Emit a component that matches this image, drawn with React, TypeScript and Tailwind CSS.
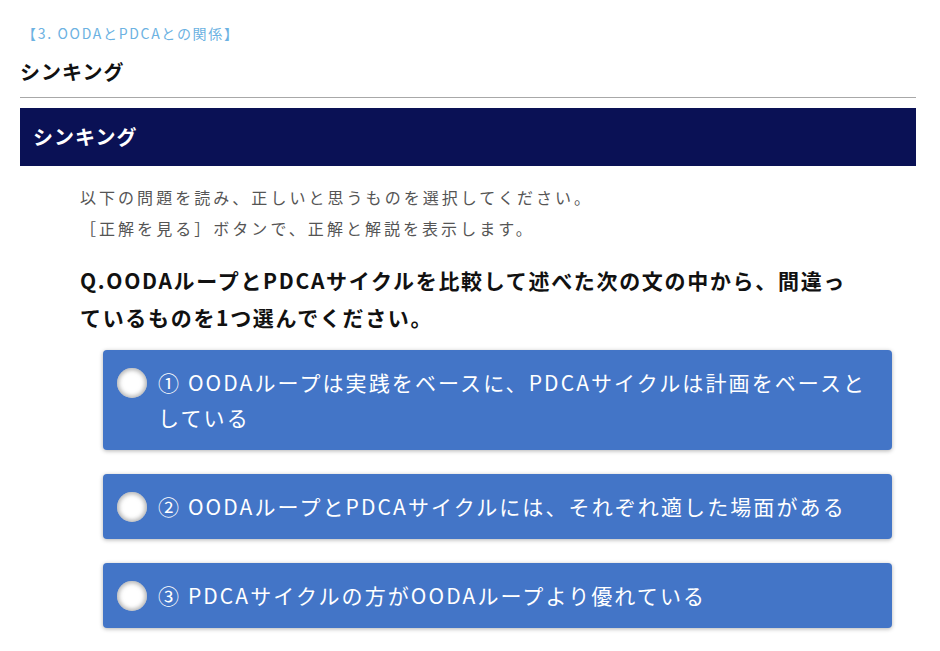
const options = [
  "① OODAループは実践をベースに、PDCAサイクルは計画をベースとしている",
  "② OODAループとPDCAサイクルには、それぞれ適した場面がある",
  "③ PDCAサイクルの方がOODAループより優れている",
];

function Choice({ label }: { label: string }) {
  return (
    <div className="flex items-start gap-[11px] rounded-[4px] bg-[#4375c7] pt-[15px] pb-[15px] pl-[14px] pr-[18px] shadow-[0_1px_4px_rgba(0,0,0,0.3)]">
      <span className="mt-[3px] h-[30px] w-[30px] shrink-0 rounded-full bg-white shadow-[inset_0_0_4px_2px_rgba(120,120,120,0.55)]" />
      <p className="text-[21px] leading-[35px] tracking-[0.1em] text-white">{label}</p>
    </div>
  );
}

export default function App() {
  return (
    <div className="min-h-screen bg-white pl-5 pr-[24px] pt-[22px] font-['Noto_Sans_CJK_JP','Noto_Sans',sans-serif]">
      <p className="pl-[2px] text-[14px] leading-[22px] tracking-[0.12em] text-[#6cb2e2]">
        【3. OODAとPDCAとの関係】
      </p>
      <h1 className="mt-[11px] text-[20px] font-bold leading-[34px] tracking-[0.05em] text-[#111]">
        シンキング
      </h1>
      <div className="mt-[8px] h-px bg-[#a8a8a8]" />
      <div className="mt-[10px] flex h-[58px] items-center bg-[#0a1155] px-[13px]">
        <h2 className="text-[20px] font-bold tracking-[0.05em] text-white">シンキング</h2>
      </div>

      <div className="pl-[60px] pr-[24px]">
        <div className="mt-[16px] text-[16px] leading-[31px] tracking-[0.19em] text-[#555]">
          <p>以下の問題を読み、正しいと思うものを選択してください。</p>
          <p>［正解を見る］ボタンで、正解と解説を表示します。</p>
        </div>
        <p className="mt-[18px] pr-[34px] text-[21px] font-bold leading-[37px] tracking-[0.08em] text-[#111]">
          Q.OODAループとPDCAサイクルを比較して述べた次の文の中から、間違っているものを1つ選んでください。
        </p>

        <div className="mt-[14px] ml-[23px] flex flex-col gap-[24px]">
          {options.map((o) => (
            <Choice key={o} label={o} />
          ))}
        </div>
      </div>
    </div>
  );
}
